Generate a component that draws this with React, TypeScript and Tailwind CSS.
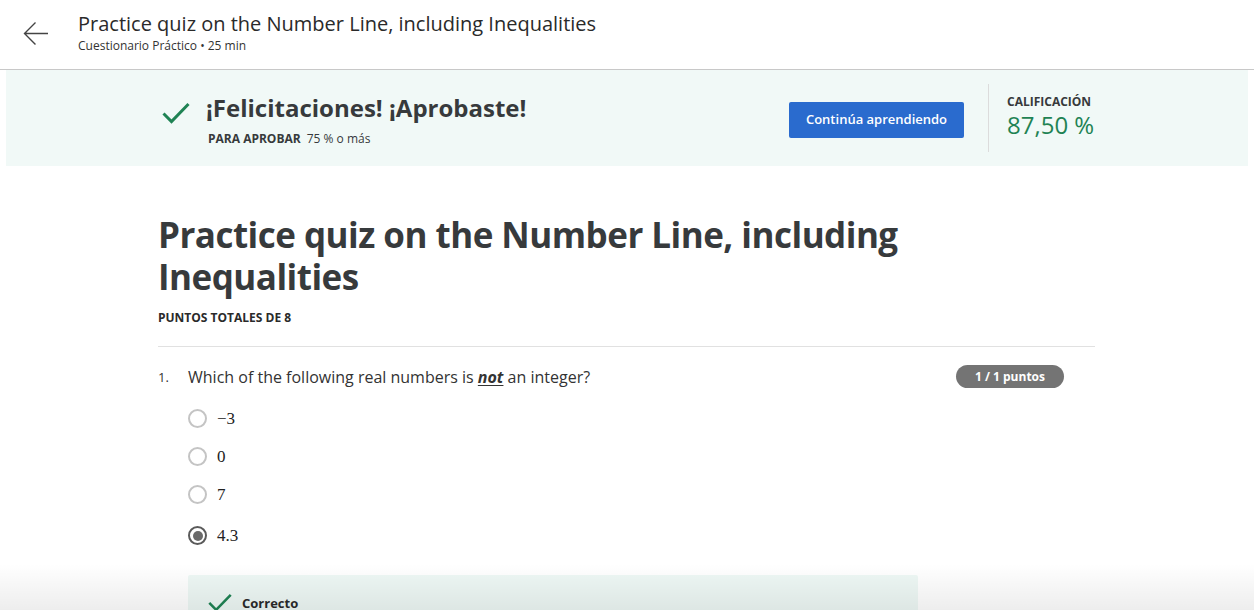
import React from 'react';

const font = { fontFamily: '"Open Sans", sans-serif' };

const CheckIcon = ({ className }: { className?: string }) => (
  <svg viewBox="0 0 28 22" className={className} fill="none">
    <path d="M1.5 11.5 L9.5 19.5 L26.5 2" stroke="#1f8354" strokeWidth="3" />
  </svg>
);

const Radio = ({ checked }: { checked?: boolean }) => (
  <span
    className={`w-[19px] h-[19px] rounded-full border-2 flex items-center justify-center shrink-0 ${
      checked ? 'border-[#5a5a5a]' : 'border-[#c4c4c4]'
    }`}
  >
    {checked && <span className="w-[10px] h-[10px] rounded-full bg-[#6a6a6a]" />}
  </span>
);

export default function App() {
  const answers = ['−3', '0', '7', '4.3'];
  return (
    <div className="relative w-[1254px] h-[610px] overflow-hidden bg-white text-[#1f1f1f]" style={font}>
      {/* Header */}
      <header className="h-[70px] flex items-start border-b border-[#c8c8c8]">
        <div className="w-[78px] pt-[21px] pl-[23px]">
          <svg width="26" height="26" viewBox="0 0 26 26" fill="none">
            <path d="M25 12.5 H2 M12.5 1.5 L1.5 12.5 L12.5 23.5" stroke="#444" strokeWidth="1.4" />
          </svg>
        </div>
        <div className="pt-[10px]">
          <div className="text-[20px] leading-[28px] text-[#2a2a2a]">Practice quiz on the Number Line, including Inequalities</div>
          <div className="text-[12px] leading-[16px] text-[#333]">Cuestionario Práctico • 25 min</div>
        </div>
      </header>

      {/* Banner */}
      <div className="mx-[6px] h-[96px] bg-[#f1f9f7] flex items-center">
        <div className="w-[783px] pl-[156px] flex items-start pt-[2px]">
          <CheckIcon className="w-[28px] h-[22px] mt-[10px] shrink-0" />
          <div className="ml-[16px]">
            <div className="text-[24px] font-bold leading-[32px] text-[#373a3c]">¡Felicitaciones! ¡Aprobaste!</div>
            <div className="mt-[7px] ml-[2px] text-[12px] leading-[16px] text-[#373a3c]">
              <span className="font-bold">PARA APROBAR</span>
              <span className="ml-[6px]">75 % o más</span>
            </div>
          </div>
        </div>
        <button className="w-[175px] h-[36px] mt-[4px] bg-[#2a6bce] rounded-[2px] text-white text-[13px] font-semibold shrink-0">
          Continúa aprendiendo
        </button>
        <div className="w-px h-[68px] bg-[#dcdcdc] ml-[24px] shrink-0" />
        <div className="ml-[18px] w-[160px] pb-[6px]">
          <div className="text-[12px] font-bold leading-[17px] text-[#373a3c] mb-[2px]">CALIFICACIÓN</div>
          <div className="text-[24px] leading-[26px] text-[#1f8354]">87,50 %</div>
        </div>
      </div>

      {/* Content */}
      <main className="ml-[158px] w-[937px] pt-[48px]">
        <h1 className="text-[35px] tracking-[-0.015em] font-bold leading-[42px] text-[#373a3c] w-[800px]">
          Practice quiz on the Number Line, including Inequalities
        </h1>
        <div className="mt-[12px] text-[12px] font-bold leading-[16px] text-[#2a2a2a]">PUNTOS TOTALES DE 8</div>
        <div className="mt-[20px] border-t border-[#e1e1e1]" />

        <div className="mt-[19px] flex items-start">
          <span className="w-[30px] text-[13px] leading-[22px] text-[#333]">1.</span>
          <div className="flex-1">
            <div className="text-[16px] leading-[22px] text-[#333]">
              Which of the following real numbers is{' '}
              <strong className="italic underline underline-offset-2">not</strong> an integer?
            </div>
            <div className="mt-[21px] flex flex-col gap-[19px]">
              {answers.map((a, i) => (
                <div key={a} className={`flex items-center gap-[10px] h-[19px] ${i === 3 ? 'mt-[3px]' : ''}`}>
                  <Radio checked={i === 3} />
                  <span className="text-[17px] text-[#222]" style={{ fontFamily: '"Liberation Serif", serif' }}>{a}</span>
                </div>
              ))}
            </div>
          </div>
          <span className="mr-[31px] mt-[-1px] h-[23px] px-[19px] rounded-full bg-[#747474] text-white text-[12px] font-bold leading-[23px]">
            1 / 1 puntos
          </span>
        </div>

        <div className="mt-[30px] ml-[30px] w-[730px] h-[60px] bg-[#eef8f5] rounded-[2px] flex items-start pl-[20px] pt-[18px]">
          <CheckIcon className="w-[24px] h-[19px]" />
          <span className="ml-[10px] text-[13px] font-bold text-[#2a2a2a] leading-[18px] mt-[1px]">Correcto</span>
        </div>
      </main>

      {/* bottom fade */}
      <div className="absolute left-0 right-0 bottom-0 h-[46px] bg-gradient-to-b from-transparent to-[rgba(0,0,0,0.07)] pointer-events-none" />
    </div>
  );
}
